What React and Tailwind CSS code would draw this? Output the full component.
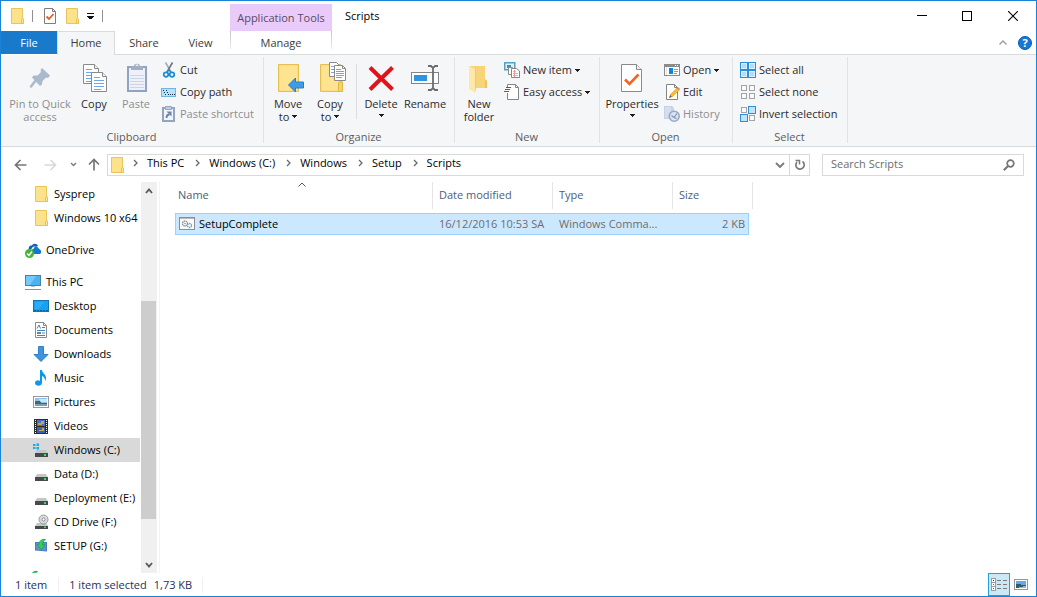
import React from "react";

function Svg({ w = 16, h = 16, crisp = false, children, className = "" }) {
  return (
    <svg
      width={w}
      height={h}
      viewBox={`0 0 ${w} ${h}`}
      fill="none"
      aria-hidden="true"
      shapeRendering={crisp ? "crispEdges" : "auto"}
      className={`shrink-0 ${className}`}
    >
      {children}
    </svg>
  );
}

/* ---------- small icons ---------- */

const FolderIcon = () => (
  <Svg>
    <path d="M2.5 .5H13.5V10.5L14.5 11V15.5H2.5Z" fill="#fde28c" stroke="#e9c55c" />
    <path d="M12.5 15V11L13.5 10.5L14.5 11V15.5H12.5Z" fill="#ffe9a2" stroke="#e9c04a" />
  </Svg>
);

const CheckPageIcon = () => (
  <Svg>
    <path d="M2.5 .5H10.5L13.5 3.5V15.5H2.5Z" fill="#fff" stroke="#7d7d7d" />
    <path d="M10.5 .5V3.5H13.5" stroke="#7d7d7d" />
    <path d="M4.5 8.500L7 11L11.500 6" stroke="#ea5b21" strokeWidth="1.800" />
  </Svg>
);

const CutIcon = () => (
  <Svg>
    <path d="M4.500 .5L10 10" stroke="#a3adb8" strokeWidth="1.600" />
    <path d="M11.500 .5L6 10" stroke="#6b7682" strokeWidth="1.600" />
    <circle cx="5" cy="12.600" r="2.300" stroke="#1e8ad3" strokeWidth="1.700" />
    <circle cx="11" cy="12.600" r="2.300" stroke="#1e8ad3" strokeWidth="1.700" />
    <path d="M6 10L8 8L10 10" stroke="#1e8ad3" strokeWidth="1.400" />
  </Svg>
);

const CopyPathIcon = () => (
  <Svg crisp>
    <rect x=".5" y="4.5" width="14" height="8" fill="#b5e1fb" stroke="#6fb6e2" />
    <path d="M2 6h1v2h1v2h1v1H4V9H3V7H2zM5 6h1v2h1v2h1v1H7V9H6V7H5zM9 10h1v1H9zM11 10h1v1h-1zM13 10h1v1h-1z" fill="#1b2f44" />
  </Svg>
);

const PasteShortcutIcon = () => (
  <Svg>
    <rect x="2" y="2" width="11" height="13" fill="#f1f5fa" stroke="#93a4c2" strokeWidth="2" />
    <path d="M4.5 0.5H10.5V3.5H4.5Z" fill="#c5cedd" stroke="#93a4c2" />
    <path d="M5.500 12C5.500 9.500 6.500 8.500 8.500 8.500" stroke="#6d83ac" strokeWidth="1.800" />
    <path d="M5.500 5.500H10.500V10.500Z" fill="#6d83ac" />
  </Svg>
);

const NewItemIcon = () => (
  <Svg>
    <rect x=".75" y=".75" width="10" height="7" fill="#dff2fd" stroke="#5aa0c0" strokeWidth="1.5" />
    <rect x="3" y="3" width="4" height="3" fill="#3a8fb8" />
    <path d="M4.5 5.5H8.5L10.5 7.5V12.5H4.5Z" fill="#fff" stroke="#8a8a8a" />
    <path d="M7.500 6.500H12.500L15.500 9V15.500H7.500Z" fill="#fff" stroke="#858585" />
    <path d="M9 9.5H12M9 11.5H14M9 13.5H14" stroke="#a9c4de" />
    <path d="M10.500 8V15" stroke="#ef9a9a" />
  </Svg>
);

const EasyAccessIcon = () => (
  <Svg>
    <path d="M3.5 .5H11.5L14.5 3.5V15.5H3.5Z" fill="#fff" stroke="#858585" />
    <path d="M11.5 .5V3.5H14.5" stroke="#858585" />
    <path d="M0 9H5.5L7 3H2V8" fill="#fafafa" />
    <path d="M2 3.5H7M1 5.5H6M0 7.5H5" stroke="#1d6db5" strokeWidth="1.2" />
  </Svg>
);

const OpenIcon = () => (
  <Svg crisp>
    <rect x=".5" y="2.5" width="15" height="11" fill="#fff" stroke="#8a8a8a" />
    <path d="M0 2H16V5H0Z" fill="#8a8a8a" />
    <path d="M11 3h1v1h-1zM13 3h1v1h-1z" fill="#fff" />
    <rect x="5" y="6" width="4" height="6" fill="#0f86dd" />
    <path d="M10 7.5H14M10 9.5H14M10 11.5H13" stroke="#9a9a9a" />
    <path d="M2.5 5V13" stroke="#dedede" />
  </Svg>
);

const EditIcon = () => (
  <Svg>
    <path d="M2.5 .5H10.5L13.5 3.5V15.5H2.5Z" fill="#fff" stroke="#848484" />
    <path d="M10.5 .5V3.5H13.5" stroke="#848484" />
    <path d="M6 11L13 4L15.2 6L8 13Z" fill="#f8bd35" stroke="#d69325" strokeWidth=".6" />
    <path d="M13 4L14 3.2L16 5L15.2 6Z" fill="#df6d5c" />
    <path d="M6 11L5 14L8 13Z" fill="#6a6258" />
  </Svg>
);

const HistoryIcon = () => (
  <Svg>
    <path d="M0 0H8L10 2V13H0Z" fill="#c6d2e6" />
    <path d="M1 1H7V12H1Z" fill="#d5deed" />
    <circle cx="10.2" cy="10.2" r="5" fill="#dce4f0" stroke="#9aa9c5" strokeWidth="1.6" />
    <path d="M7.5 9.5L10 11.5L13 7.5M10 11.5L12.5 12.5" stroke="#7d8fb2" strokeWidth="1.1" />
  </Svg>
);

const SelectAllIcon = () => (
  <Svg crisp>
    <rect width="16" height="16" fill="#2d8fdc" />
    <path d="M1 1H7V7H1ZM9 1H15V7H9ZM1 9H7V15H1ZM9 9H15V15H9Z" fill="#d8effe" />
    <path d="M2 2H6V6H2ZM10 2H14V6H10ZM2 10H6V14H2ZM10 10H14V14H10Z" fill="#b2ddfa" />
  </Svg>
);

const SelectNoneIcon = () => (
  <Svg crisp>
    <path d="M1.5 1.5H6.5V6.5H1.5ZM9.5 1.5H14.5V6.5H9.5ZM1.5 9.5H6.5V14.5H1.5ZM9.5 9.5H14.5V14.5H9.5Z" fill="#fafafa" stroke="#a3a3a3" />
  </Svg>
);

const InvertIcon = () => (
  <Svg crisp>
    <path d="M1.5 1.5H6.5V6.5H1.5ZM9.5 9.5H14.5V14.5H9.5Z" fill="#fafafa" stroke="#a3a3a3" />
    <path d="M8.5 .5H15.5V7.5H8.5ZM.5 8.5H7.5V15.5H.5Z" fill="#bfe4fc" stroke="#2d8fdc" />
  </Svg>
);

const Caret = ({ className = "" }) => (
  <Svg w={5} h={3} crisp className={className}>
    <path d="M0 0H5V1H4V2H3V3H2V2H1V1H0Z" fill="#1e1e1e" />
  </Svg>
);

/* ---------- large icons ---------- */

const PinLarge = () => (
  <Svg w={32} h={32}>
    <path d="M18 6L26 13.500L24 16L22 15.500L18.500 19L18 22.500L16 24L8 15.500L9.500 13.500L13.500 13.500L17 10L16.500 8Z" fill="#aab9cd" />
    <path d="M12 18L7 24.500" stroke="#aab9cd" strokeWidth="2.5" strokeLinecap="round" />
  </Svg>
);

const CopyPage = ({ x, y }) => (
  <g transform={`translate(${x} ${y})`}>
    <path d="M.5 .5H11.5L15.5 4.5V19.5H.5Z" fill="#fff" stroke="#8a8a8a" />
    <path d="M11.5 .5V4.5H15.5" fill="#eee" stroke="#8a8a8a" />
    <path d="M3 5.5H9M3 8.5H13M3 11.5H13M3 14.5H13M3 17.500H10" stroke="#6aa7ec" />
  </g>
);

const CopyLarge = () => (
  <Svg w={32} h={32}>
    <CopyPage x={5} y={2} />
    <CopyPage x={13} y={10} />
  </Svg>
);

const PasteLarge = () => (
  <Svg w={32} h={32}>
    <rect x="8" y="5" width="18" height="24" fill="#eef2f8" stroke="#91a3c2" strokeWidth="2" />
    <path d="M10 13.5H24M10 16.5H24M10 19.5H24M10 22.5H24M10 25.5H24" stroke="#cbd5e4" />
    <path d="M11 8V4H14C14 1 20 1 20 4H23V8Z" fill="#a2aec3" />
    <path d="M15.5 4C15.5 2 18.5 2 18.5 4Z" fill="#eef2f8" />
  </Svg>
);

const MoveLarge = () => (
  <Svg w={32} h={32}>
    <path d="M6.5 2.5H26.5V29.5H6.5Z" fill="#fcdd80" stroke="#e6be51" />
    <path d="M8 4H25V28H8Z" fill="#fee391" />
    <path d="M16.5 23L23.5 16V20H31.5V26H23.5V30Z" fill="#3d9be8" stroke="#2c7cc4" />
  </Svg>
);

const CopyToLarge = () => (
  <Svg w={32} h={32}>
    <path d="M6.5 2.5H26.5V19L28.5 20V29.5H6.5Z" fill="#fcdd80" stroke="#e6be51" />
    <path d="M8 4H25V28H8Z" fill="#fee391" />
    <path d="M24.5 29V20.5L26.5 19.5L28.5 20.5V29.5H24.5Z" fill="#f7d26b" stroke="#e2b647" />
    <path d="M15.5 .5H22.5L25.5 3.5V14.5H15.5Z" fill="#fff" stroke="#8a8a8a" />
    <path d="M17 4.5H21M17 7.5H20M17 10.5H20" stroke="#6aa7ec" />
    <path d="M20.5 3.5H28.5L31.5 6.5V18.5H20.5Z" fill="#fff" stroke="#8a8a8a" />
    <path d="M28.5 3.5V6.5H31.5" stroke="#8a8a8a" />
    <path d="M22 7.5H27M22 9.500H30M22 11.500H30M22 13.500H30M22 15.500H28" stroke="#6aa7ec" />
  </Svg>
);

const DeleteLarge = () => (
  <Svg w={32} h={32}>
    <path d="M5 5.500L27.500 27.500M27.500 5.500L5 27.500" stroke="#e1121b" strokeWidth="4" />
  </Svg>
);

const RenameLarge = () => (
  <Svg w={32} h={32}>
    <rect x="2.5" y="10.5" width="27" height="11" fill="#fdfdfd" stroke="#848484" />
    <rect x="5" y="13" width="13" height="6" fill="#2d93e3" />
    <path d="M19 4H22L24 6L26 4H29M19 28H22L24 26L26 28H29M24 6V26" stroke="#6c6c6c" strokeWidth="1.800" />
  </Svg>
);

const NewFolderLarge = () => (
  <Svg w={32} h={32}>
    <path d="M6 4H22V18L24 20V26H12Z" fill="#f7d478" />
    <path d="M22 18V26H24V19L22 17Z" fill="#edc25a" />
    <path d="M6 4L12 7V31L6 27Z" fill="#fee8a9" />
    <path d="M12 7L13 7V26L12 31Z" fill="#f0c966" />
  </Svg>
);

const PropertiesLarge = () => (
  <Svg w={32} h={32}>
    <path d="M5.5 2.5H20.5L25.5 7.5V29.5H5.5Z" fill="#fff" stroke="#8a8a8a" />
    <path d="M20.5 2.5V7.5H25.5" fill="#eee" stroke="#8a8a8a" />
    <path d="M9 17.5L13.5 22L22.5 12.5" stroke="#f26522" strokeWidth="2.6" />
  </Svg>
);

/* ---------- navigation pane icons ---------- */

const OneDriveIcon = () => (
  <Svg>
    <path d="M4 8C3 5 5 3 7 3.5C8 1 12 1 13 4L11 5C9 4 7 5 6.5 7Z" fill="#0b63b5" />
    <path d="M6 12C5 9 7 7 8.500 7C9 4 13 4 14 7C16 7 17 11 15 12Z" fill="#1277d3" />
    <circle cx="4.5" cy="11.500" r="4.5" fill="#43b532" />
    <path d="M2 11.500L4 13.500L7 9.500" stroke="#fff" strokeWidth="1.4" />
  </Svg>
);

const ThisPCIcon = () => (
  <Svg>
    <rect x=".5" y="1.500" width="15" height="10" fill="#48b4f5" stroke="#4d7f9e" />
    <path d="M1 2H11L5 11H1Z" fill="#74cafb" />
    <path d="M6 12H10V13H6Z" fill="#b6c2cc" />
    <path d="M0 15.500H16" stroke="#8295a4" />
  </Svg>
);

const DesktopIcon = () => (
  <Svg crisp>
    <rect x=".5" y="2.5" width="15" height="11" fill="#16a1f2" stroke="#1573ae" />
    <path d="M2 4H11L6 11H2Z" fill="#2aacf7" />
    <path d="M1 12.500H15" stroke="#0d5d99" strokeDasharray="2 1" />
  </Svg>
);

const DocumentsIcon = () => (
  <Svg>
    <path d="M2.500 .5H10.500L13.500 3.500V15.500H2.500Z" fill="#fff" stroke="#8b8b8b" />
    <path d="M10.500 .5V3.500H13.500" stroke="#8b8b8b" />
    <path d="M4 6.500L6 3L7.500 6.500M9 5.500H12M4 8.500H12M9 11H12M4 13.500H12" stroke="#3e85ba" />
    <rect x="4" y="10" width="4" height="2" fill="#5c87a8" />
  </Svg>
);

const DownloadsIcon = () => (
  <Svg>
    <path d="M5.500 .5H10.500V8.500H15L8 15.500L1 8.500H5.500Z" fill="#3d95e2" stroke="#3580c4" />
  </Svg>
);

const MusicIcon = () => (
  <Svg>
    <path d="M7 0H9C9 3 13 4 13 8C13 9.500 12.500 10.500 12 11C12 8 11 7 9 6V12.500C9 17 2 16.500 2 13C2 10.500 5 9.500 7 11Z" fill="#0b98ea" />
  </Svg>
);

const PicturesIcon = () => (
  <Svg crisp>
    <rect x=".5" y="2.500" width="15" height="11" fill="#fff" stroke="#979797" />
    <rect x="2" y="4" width="12" height="8" fill="#8cc1f3" />
    <path d="M5 5H14V8H8Z" fill="#cfe6f9" />
    <path d="M2 7H6L9 9H14V10H2Z" fill="#3c6a74" />
    <path d="M2 10H14V12H2Z" fill="#7b9fb2" />
  </Svg>
);

const VideosIcon = () => (
  <Svg crisp>
    <rect x="1" y="1" width="14" height="15" fill="#2c2c2c" />
    <path d="M2.500 2V16M13.500 2V16" stroke="#f2f2f2" strokeDasharray="1 1" />
    <rect x="4" y="2" width="8" height="6" fill="#4a73c4" />
    <rect x="4" y="9" width="8" height="6" fill="#3563b8" />
    <path d="M5 5H8V3H11V6H9V7H5ZM6 12H9V10H11V13H6Z" fill="#cda340" />
  </Svg>
);

const DriveBase = () => (
  <>
    <path d="M4 8H13L15 11.500H2Z" fill="#c3c7c6" />
    <rect x="2" y="11" width="13" height="4" fill="#454a4a" />
    <rect x="11" y="12" width="2" height="2" fill="#3fdc55" />
  </>
);

const DriveIcon = () => (
  <Svg>
    <DriveBase />
  </Svg>
);

const WindowsDriveIcon = () => (
  <Svg>
    <DriveBase />
    <path d="M0 2H2.500V4H0ZM3.500 1.500H6V4H3.500ZM0 5H2.500V7H0ZM3.500 5H6V7.500H3.500Z" fill="#12aef0" />
  </Svg>
);

const CdDriveIcon = () => (
  <Svg>
    <path d="M4 9H13L15 12H2Z" fill="#c3c7c6" />
    <rect x="2" y="12" width="13" height="3" fill="#454a4a" />
    <circle cx="10.500" cy="5.500" r="4.500" fill="#d9dcdd" stroke="#9a9d9f" />
    <circle cx="10.500" cy="5.500" r="1.500" fill="#fff" stroke="#8b8e90" />
    <rect x="11" y="12.500" width="2" height="1.500" fill="#3fdc55" />
  </Svg>
);

const SetupIcon = () => (
  <Svg>
    <path d="M2 4H14V13.500L2 12.500Z" fill="#4a7bbf" />
    <path d="M3 5H13V12.500L3 11.500Z" fill="#6092d2" />
    <path d="M4 6.500L8.500 11.500L12 7H9.500C9.500 5 10 3 12.500 1.500C8.500 .5 6 3.500 6 6.500Z" fill="#34cf5a" stroke="#1f9c40" strokeWidth=".7" />
  </Svg>
);

const BatchFileIcon = () => (
  <Svg>
    <rect x=".5" y="1.500" width="15" height="12" fill="#fafafa" stroke="#8b8f94" />
    <path d="M1 2.500H15" stroke="#b9bdc1" />
    <circle cx="6" cy="7.500" r="2.500" stroke="#8d9399" strokeWidth="1.300" strokeDasharray="1.500 .5" />
    <circle cx="6" cy="7.500" r=".8" fill="#8d9399" />
    <circle cx="10.500" cy="9.500" r="2" stroke="#71a9c9" strokeWidth="1.300" strokeDasharray="1.500 .5" />
  </Svg>
);

/* ---------- ribbon parts ---------- */

function BigButton({ icon, lines, width, disabled, caret }) {
  return (
    <button
      type="button"
      disabled={disabled}
      className={`flex shrink-0 flex-col items-center gap-[3px] leading-[13px] ${width} ${disabled ? "text-[#8c8e92]" : "text-[#2b2b2b]"}`}
    >
      {icon}
      <span className="flex flex-col items-center whitespace-nowrap">
        {lines.map((l, i) => (
          <span key={l} className="flex items-center gap-[3px]">
            {l}
            {caret && lines.length > 1 && i === lines.length - 1 && <Caret />}
          </span>
        ))}
        {caret && lines.length === 1 && <Caret className="mt-1" />}
      </span>
    </button>
  );
}

function SmallButton({ icon, label, disabled, caret }) {
  return (
    <button
      type="button"
      disabled={disabled}
      className={`flex h-[22px] items-center gap-[3px] whitespace-nowrap ${disabled ? "text-[#8c8e92]" : "text-[#2b2b2b]"}`}
    >
      {icon}
      <span>{label}</span>
      {caret && <Caret />}
    </button>
  );
}

function Group({ label, width, children }) {
  return (
    <section className={`flex shrink-0 flex-col justify-between border-r border-[#e2e3e4] ${width}`}>
      <div className="flex items-start pt-1">{children}</div>
      <h2 className="pr-px text-center leading-[13px] text-[#5d5d5d]">{label}</h2>
    </section>
  );
}

function Ribbon() {
  return (
    <div className="flex h-[92px] shrink-0 overflow-hidden border-b border-[#d9dadb] bg-[#f5f6f7] pt-[2px] pb-[3px]">
      <Group label="Clipboard" width="w-[263px]">
        <div className="flex pl-[4px] pt-[1px]">
          <BigButton icon={<PinLarge />} lines={["Pin to Quick", "access"]} width="w-[70px]" disabled />
          <BigButton icon={<CopyLarge />} lines={["Copy"]} width="w-[38px]" />
          <BigButton icon={<PasteLarge />} lines={["Paste"]} width="w-[46px]" disabled />
        </div>
        <div className="-mt-[2px] ml-[2px] flex flex-col">
          <SmallButton icon={<CutIcon />} label="Cut" />
          <SmallButton icon={<CopyPathIcon />} label="Copy path" />
          <SmallButton icon={<PasteShortcutIcon />} label="Paste shortcut" disabled />
        </div>
      </Group>
      <Group label="Organize" width="w-[191px]">
        <div className="flex pl-[3px] pt-[1px]">
          <BigButton icon={<MoveLarge />} lines={["Move", "to"]} width="w-[42px]" caret />
          <BigButton icon={<CopyToLarge />} lines={["Copy", "to"]} width="w-[42px]" caret />
          <div className="mr-[4px] ml-[5px] mt-[2px] h-[55px] w-px bg-[#dcdddf]" />
          <BigButton icon={<DeleteLarge />} lines={["Delete"]} width="w-[40px]" caret />
          <BigButton icon={<RenameLarge />} lines={["Rename"]} width="w-[48px]" />
        </div>
      </Group>
      <Group label="New" width="w-[145px]">
        <div className="flex pl-[4px] pt-[1px]">
          <BigButton icon={<NewFolderLarge />} lines={["New", "folder"]} width="w-[40px]" />
        </div>
        <div className="-mt-[2px] ml-[5px] flex flex-col">
          <SmallButton icon={<NewItemIcon />} label="New item" caret />
          <SmallButton icon={<EasyAccessIcon />} label="Easy access" caret />
        </div>
      </Group>
      <Group label="Open" width="w-[133px]">
        <div className="flex pl-[4px] pt-[1px]">
          <BigButton icon={<PropertiesLarge />} lines={["Properties"]} width="w-[56px]" caret />
        </div>
        <div className="-mt-[2px] ml-[4px] flex flex-col">
          <SmallButton icon={<OpenIcon />} label="Open" caret />
          <SmallButton icon={<EditIcon />} label="Edit" />
          <SmallButton icon={<HistoryIcon />} label="History" disabled />
        </div>
      </Group>
      <Group label="Select" width="w-[115px]">
        <div className="-mt-[2px] ml-[7px] flex flex-col">
          <SmallButton icon={<SelectAllIcon />} label="Select all" />
          <SmallButton icon={<SelectNoneIcon />} label="Select none" />
          <SmallButton icon={<InvertIcon />} label="Invert selection" />
        </div>
      </Group>
    </div>
  );
}

/* ---------- title bar and tabs ---------- */

function Header() {
  return (
    <header className="flex h-[54px] shrink-0">
      <div className="flex w-[229px] flex-col">
        <div className="flex h-[30px] items-center pl-[8px]">
          <FolderIcon />
          <span className="ml-[7px] h-3 w-px bg-[#8f8f8f]" />
          <button type="button" aria-label="Properties" className="ml-[9px]">
            <CheckPageIcon />
          </button>
          <button type="button" aria-label="New folder" className="ml-[6px]">
            <FolderIcon />
          </button>
          <button type="button" aria-label="Customize Quick Access Toolbar" className="ml-[7px]">
            <Svg w={7} h={6} crisp>
              <path d="M0 0H7V1H0ZM0 3H7V4H6V5H5V6H2V5H1V4H0Z" fill="#111" />
            </Svg>
          </button>
          <span className="ml-[8px] h-3 w-px bg-[#8f8f8f]" />
        </div>
        <nav className="flex h-6 text-[#3c3c3c]">
          <button type="button" className="h-[23px] w-[56px] bg-[#1979ca] text-white">File</button>
          <button type="button" className="w-[58px] border-x border-t border-[#dadbdc] bg-[#f5f6f7] pb-px">Home</button>
          <button type="button" className="w-[58px] border-b border-[#dadbdc]">Share</button>
          <button type="button" className="w-[57px] border-b border-[#dadbdc] pr-[2px]">View</button>
        </nav>
      </div>
      <div className="flex w-[102px] flex-col pt-[3px]">
        <div className="flex h-[27px] items-center justify-center bg-[#e9cbfa] text-[#5b4a66]">Application Tools</div>
        <button type="button" className="flex h-6 justify-between border-b border-[#dadbdc] text-[#3c3c3c]">
          <span className="h-[18px] w-px bg-linear-to-b from-[#c4c4c4] to-[#ededed]" />
          <span className="self-center">Manage</span>
          <span className="h-[18px] w-px bg-linear-to-b from-[#c4c4c4] to-[#ededed]" />
        </button>
      </div>
      <div className="flex min-w-0 flex-1 flex-col">
        <div className="flex h-[30px] items-center justify-between pl-[13px]">
          <h1 className="text-black">Scripts</h1>
          <div className="flex h-full">
            <button type="button" aria-label="Minimize" className="flex w-[45px] items-center justify-center">
              <Svg w={10} h={10} crisp><path d="M0 4.500H10" stroke="#000" /></Svg>
            </button>
            <button type="button" aria-label="Maximize" className="flex w-[45px] items-center justify-center">
              <Svg w={10} h={10} crisp><rect x=".5" y=".5" width="9" height="9" stroke="#000" /></Svg>
            </button>
            <button type="button" aria-label="Close" className="flex w-[47px] items-center justify-center">
              <Svg w={10} h={10}><path d="M0 0L10 10M10 0L0 10" stroke="#000" strokeWidth="1.100" /></Svg>
            </button>
          </div>
        </div>
        <div className="flex h-6 items-center justify-end gap-[11px] border-b border-[#dadbdc] pr-1">
          <button type="button" aria-label="Minimize the Ribbon">
            <Svg w={8} h={5}><path d="M.5 4.500L4 1L7.500 4.500" stroke="#9a9a9a" strokeWidth="1.300" /></Svg>
          </button>
          <button type="button" aria-label="Help" className="flex size-[14px] items-center justify-center rounded-full border border-[#0b5cab] bg-[#1678d2] text-[11px] font-bold leading-none text-white">
            ?
          </button>
        </div>
      </div>
    </header>
  );
}

/* ---------- address bar ---------- */

const Chevron = () => (
  <Svg w={5} h={8}>
    <path d="M1 1L4 4L1 7" stroke="#686868" strokeWidth="1.300" />
  </Svg>
);

const crumbs = ["This PC", "Windows (C:)", "Windows", "Setup", "Scripts"];

function AddressRow() {
  return (
    <div className="flex h-[35px] shrink-0 items-center pr-3 pl-[13px]">
      <button type="button" aria-label="Back">
        <Svg w={13} h={12}><path d="M12.500 6H1.500M6.500 1L1.500 6L6.500 11" stroke="#757575" strokeWidth="1.700" /></Svg>
      </button>
      <button type="button" aria-label="Forward" disabled className="ml-[17px]">
        <Svg w={13} h={12}><path d="M.5 6H11.500M6.500 1L11.500 6L6.500 11" stroke="#d9d9d9" strokeWidth="1.700" /></Svg>
      </button>
      <button type="button" aria-label="Recent locations" className="ml-[13px]">
        <Svg w={7} h={5}><path d="M1 1L3.500 3.500L6 1" stroke="#7c7c7c" strokeWidth="1.400" /></Svg>
      </button>
      <button type="button" aria-label="Up" className="ml-[11px]">
        <Svg w={12} h={13}><path d="M6 12.500V1.500M1 6.500L6 1.500L11 6.500" stroke="#757575" strokeWidth="1.700" /></Svg>
      </button>
      <div className="ml-[7px] flex h-[22px] min-w-0 flex-1 items-stretch border border-[#d9d9d9]">
        <div className="flex min-w-0 flex-1 items-center pl-px text-black">
          <FolderIcon />
          <ol className="flex items-center gap-[3px] pb-[3px]">
            {crumbs.map((c) => (
              <li key={c} className="flex items-center whitespace-nowrap">
                <span className="mr-[9px] ml-[8px]"><Chevron /></span>
                <a href="#">{c}</a>
              </li>
            ))}
          </ol>
        </div>
        <button type="button" aria-label="Previous locations" className="flex w-[19px] items-center justify-center">
          <Svg w={10} h={6}><path d="M1 1L5 5L9 1" stroke="#7a7a7a" strokeWidth="1.900" /></Svg>
        </button>
        <button type="button" aria-label="Refresh" className="flex w-5 items-center justify-center border-l border-[#d9d9d9]">
          <Svg w={12} h={12}>
            <path d="M8.500 2.500A4.200 4.200 0 1 1 3 3" stroke="#7a7a7a" strokeWidth="1.700" />
            <path d="M1.500 1.500H5.500V5.500" stroke="#7a7a7a" strokeWidth="1.500" />
          </Svg>
        </button>
      </div>
      <div className="ml-3 flex h-[22px] w-[202px] items-center border border-[#d9d9d9] pr-2 pl-2">
        <input type="text" aria-label="Search Scripts" placeholder="Search Scripts" className="min-w-0 flex-1 pb-[2px] outline-none placeholder:text-[#6d6d6d]" />
        <Svg w={12} h={12}>
          <circle cx="7.500" cy="4.500" r="3.300" stroke="#757575" strokeWidth="1.700" />
          <path d="M5 7L.8 11.200" stroke="#757575" strokeWidth="2" />
        </Svg>
      </div>
    </div>
  );
}

/* ---------- navigation pane ---------- */

const tree = [
  [["Sysprep", FolderIcon], ["Windows 10 x64", FolderIcon]],
  [["OneDrive", OneDriveIcon, "root"]],
  [
    ["This PC", ThisPCIcon, "root"],
    ["Desktop", DesktopIcon],
    ["Documents", DocumentsIcon],
    ["Downloads", DownloadsIcon],
    ["Music", MusicIcon],
    ["Pictures", PicturesIcon],
    ["Videos", VideosIcon],
    ["Windows (C:)", WindowsDriveIcon, "selected"],
    ["Data (D:)", DriveIcon],
    ["Deployment (E:)", DriveIcon],
    ["CD Drive (F:)", CdDriveIcon],
    ["SETUP (G:)", SetupIcon],
  ],
];

function NavPane() {
  return (
    <nav className="flex w-[156px] shrink-0 overflow-hidden">
      <div className="flex h-full w-[140px] flex-col gap-2 overflow-hidden text-black">
        {tree.map((items, i) => (
          <ul key={i} className="shrink-0">
            {items.map(([name, Icon, kind]) => (
              <li key={name}>
                <a
                  href="#"
                  className={`flex h-6 items-center gap-[5px] whitespace-nowrap ${kind === "root" ? "pl-6" : "pl-8"} ${kind === "selected" ? "mr-px bg-[#d9d9d9]" : ""}`}
                >
                  <Icon />
                  <span>{name}</span>
                </a>
              </li>
            ))}
          </ul>
        ))}
        <div className="flex h-6 shrink-0 items-center pl-6"><SetupIcon /></div>
      </div>
      <div className="flex flex-1 flex-col items-center bg-[#f0f0f0]">
        <button type="button" aria-label="Scroll up" className="flex h-[18px] items-center pr-px">
          <Svg w={8} h={6}><path d="M1 5L4 1.500L7 5" stroke="#5a5a5a" strokeWidth="1.900" /></Svg>
        </button>
        <div className="flex w-full flex-1 flex-col pr-px">
          <div className="flex-[101]" />
          <div className="flex-[218] bg-[#cdcdcd]" />
          <div className="flex-[37]" />
        </div>
        <button type="button" aria-label="Scroll down" className="flex h-[17px] items-center pr-px">
          <Svg w={8} h={6}><path d="M1 1L4 4.500L7 1" stroke="#5a5a5a" strokeWidth="1.900" /></Svg>
        </button>
      </div>
    </nav>
  );
}

/* ---------- file list ---------- */

function FileList() {
  return (
    <main className="ml-[2px] min-w-0 flex-1 overflow-hidden border-l border-[#f3f3f3] pl-[15px]">
      <table className="table-fixed border-separate border-spacing-0 text-left">
        <colgroup>
          <col className="w-[258px]" />
          <col className="w-[120px]" />
          <col className="w-[120px]" />
          <col className="w-[76px]" />
          <col className="w-[4px]" />
        </colgroup>
        <thead className="text-[#4c607a]">
          <tr className="h-[27px]">
            <th className="relative border-r border-[#e5e5e5] pb-[2px] pl-[3px] font-normal">
              Name
              <Svg w={8} h={5} className="absolute top-0 right-[126px]">
                <path d="M.5 4.500L4 1L7.500 4.500" stroke="#5a5a5a" />
              </Svg>
            </th>
            <th className="border-r border-[#e5e5e5] pb-[2px] pl-[6px] font-normal">Date modified</th>
            <th className="border-r border-[#e5e5e5] pb-[2px] pl-[6px] font-normal">Type</th>
            <th colSpan="2" className="border-r border-[#e5e5e5] pb-[2px] pl-[6px] font-normal">Size</th>
          </tr>
          <tr aria-hidden="true" className="h-1"><td colSpan="5" /></tr>
        </thead>
        <tbody>
          <tr className="h-[22px] whitespace-nowrap text-[#6d6d6d]">
            <td className="border-y border-l border-[#99d1ff] bg-[#cce8ff] pl-[3px] text-black">
              <span className="flex items-center gap-1"><BatchFileIcon />SetupComplete</span>
            </td>
            <td className="border-y border-[#99d1ff] bg-[#cce8ff] pl-[6px]">16/12/2016 10:53 SA</td>
            <td className="border-y border-[#99d1ff] bg-[#cce8ff] pl-[6px]">Windows Comma...</td>
            <td className="border-y border-r border-[#99d1ff] bg-[#cce8ff] pr-[3px] text-right">2 KB</td>
            <td />
          </tr>
        </tbody>
      </table>
    </main>
  );
}

/* ---------- status bar ---------- */

function StatusBar() {
  return (
    <footer className="flex h-[23px] shrink-0 items-center pl-[14px] text-[#1e2f5f]">
      <span>1 item</span>
      <span className="ml-[11px] h-4 w-px bg-[#f0f0f0]" />
      <span className="ml-[10px]">1 item selected</span>
      <span className="ml-[7px]">1,73 KB</span>
      <span className="ml-[10px] h-4 w-px bg-[#f0f0f0]" />
      <div className="ml-auto flex h-full items-center">
        <button type="button" aria-label="Details view" className="flex h-full w-[22px] items-center justify-center border border-[#26a0da] bg-[#cbe8f6]">
          <Svg w={16} h={13} crisp>
            <path d="M.5 .5H4.500V12.500H.5ZM.5 4.500H4.500M.5 8.500H4.500" fill="#fff" stroke="#9a9a9a" />
            <path d="M2 2h1v1H2z" fill="#444" />
            <path d="M2 6h1v1H2z" fill="#3478d8" />
            <path d="M2 10h1v1H2z" fill="#d02a2a" />
            <path d="M6 2.500H10M12 2.500H16M6 6.500H10M12 6.500H16M6 10.500H10M12 10.500H16" stroke="#7a7a7a" />
          </Svg>
        </button>
        <button type="button" aria-label="Large icons view" className="mr-[8px] ml-[4px]">
          <Svg w={14} h={11} crisp>
            <rect x=".5" y=".5" width="13" height="10" fill="#fff" stroke="#979797" />
            <rect x="2" y="2" width="10" height="7" fill="#6ba5ee" />
            <path d="M2 5H6L8 6H12V9H2Z" fill="#2f5f6b" />
            <path d="M5 8L12 7V9H5Z" fill="#9cb7c4" />
          </Svg>
        </button>
      </div>
    </footer>
  );
}

export default function App() {
  return (
    <div className="flex h-screen flex-col overflow-hidden border border-[#1883d7] bg-white font-['Open_Sans','Noto_Sans',sans-serif] text-[11px] leading-4">
      <Header />
      <Ribbon />
      <AddressRow />
      <div className="flex min-h-0 flex-1">
        <NavPane />
        <FileList />
      </div>
      <StatusBar />
    </div>
  );
}
